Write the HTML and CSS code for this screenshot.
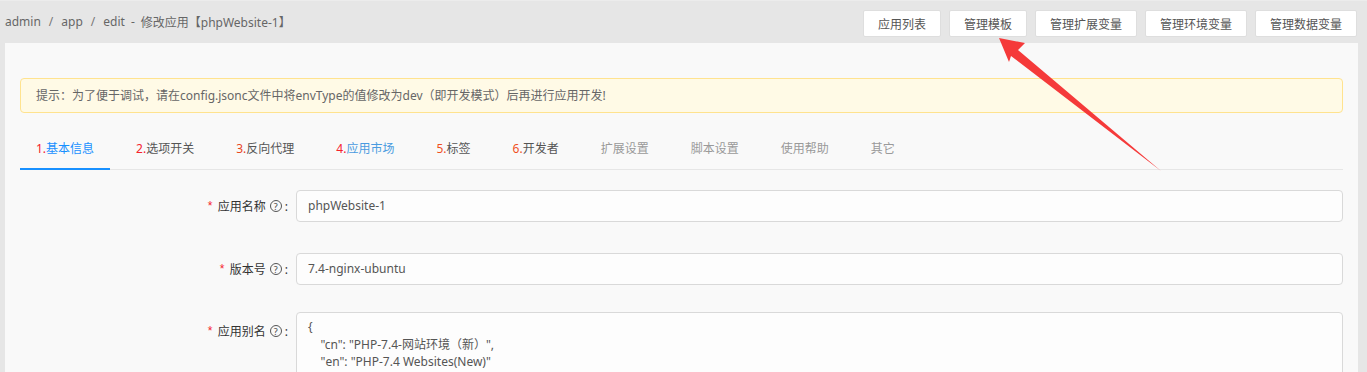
FILE: index.html
```html
<!DOCTYPE html>
<html lang="zh-CN">
<head>
<meta charset="utf-8">
<title>修改应用</title>
<link rel="stylesheet" href="styles.css">
</head>
<body>
<div class="topbar">
  <div class="crumbs">
    <span>admin</span><span class="sep">/</span><span>app</span><span class="sep">/</span><span>edit</span><span class="dash">-</span><span>修改应用【phpWebsite-1】</span>
  </div>
  <div class="actions">
    <button class="btn">应用列表</button>
    <button class="btn">管理模板</button>
    <button class="btn">管理扩展变量</button>
    <button class="btn">管理环境变量</button>
    <button class="btn">管理数据变量</button>
  </div>
</div>

<div class="panel">
  <div class="alert">提示：为了便于调试，请在config.jsonc文件中将envType的值修改为dev（即开发模式）后再进行应用开发!</div>

  <div class="tabs">
    <div class="tab active"><span class="num n1">1.</span>基本信息</div>
    <div class="tab"><span class="num n1">2.</span>选项开关</div>
    <div class="tab"><span class="num n3">3.</span>反向代理</div>
    <div class="tab market"><span class="num n1">4.</span>应用市场</div>
    <div class="tab"><span class="num n5">5.</span>标签</div>
    <div class="tab"><span class="num n5">6.</span>开发者</div>
    <div class="tab muted">扩展设置</div>
    <div class="tab muted">脚本设置</div>
    <div class="tab muted">使用帮助</div>
    <div class="tab muted">其它</div>
  </div>

  <div class="form">
    <div class="row">
      <label class="label"><span class="req">*</span>应用名称<span class="help">?</span>:</label>
      <div class="field input">phpWebsite-1</div>
    </div>
    <div class="row">
      <label class="label"><span class="req">*</span>版本号<span class="help">?</span>:</label>
      <div class="field input">7.4-nginx-ubuntu</div>
    </div>
    <div class="row row-area">
      <label class="label"><span class="req">*</span>应用别名<span class="help">?</span>:</label>
      <div class="field textarea">{
    "cn": "PHP-7.4-网站环境（新）",
    "en": "PHP-7.4 Websites(New)"</div>
    </div>
  </div>
</div>

<svg class="arrow" width="1367" height="372" viewBox="0 0 1367 372" aria-hidden="true">
  <polygon points="999,37 1025,42 1018,49 1161,170 1011,55 1009,61" fill="#f53a3a"/>
</svg>
</body>
</html>
```

FILE: styles.css
```css
* { box-sizing: border-box; }

html, body {
  margin: 0;
  padding: 0;
}

body {
  background: #e6e6e6;
  font-family: "Noto Sans", "Noto Sans CJK SC", sans-serif;
  font-size: 12px;
  color: #555;
  height: 372px;
  overflow: hidden;
  position: relative;
  border-top: 1px solid #ececec;
}

.topbar {
  display: flex;
  justify-content: space-between;
  align-items: center;
  height: 42px;
  padding: 0 10px 0 5px;
}

.crumbs {
  display: flex;
  align-items: center;
  color: #666;
  font-size: 12px;
  margin-top: -1px;
}

.crumbs .sep {
  margin: 0 8px;
  color: #777;
}

.crumbs .dash {
  margin: 0 6px;
}

.actions {
  display: flex;
  gap: 8px;
  margin-top: 2px;
}

.btn {
  height: 27px;
  padding: 0 14px;
  background: #fff;
  border: 1px solid #dedede;
  border-radius: 2px;
  font-family: "Noto Sans CJK SC", sans-serif;
  font-size: 12px;
  color: #555;
  cursor: pointer;
}

.panel {
  margin: 0 9px 0 5px;
  background: #f9f9f9;
  padding: 35px 15px 0 15px;
  height: 329px;
  overflow: hidden;
}

.alert {
  height: 35px;
  line-height: 33px;
  border: 1px solid #ffe38f;
  background: #fffae6;
  border-radius: 4px;
  padding: 0 15px;
  color: #666;
  font-size: 12px;
}

.tabs {
  display: flex;
  gap: 10px;
  margin-top: 15px;
  border-bottom: 1px solid #e6e6e6;
}

.tab {
  position: relative;
  padding: 11px 16px 10px;
  line-height: 20px;
  color: #555;
  white-space: nowrap;
}

.tab .num { color: #f5222d; }
.tab .n3 { color: #e8461e; }
.tab .n5 { color: #f0501e; }

.tab.active { color: #1890ff; }
.tab.active::after {
  content: "";
  position: absolute;
  left: 0;
  right: 0;
  bottom: -1px;
  height: 2px;
  background: #1890ff;
}

.tab.market { color: #4a9be0; }
.tab.muted { color: #9a9a9a; }

.form {
  padding-top: 20px;
}

.row {
  display: flex;
  align-items: flex-start;
  margin-bottom: 31px;
}

.row-area {
  margin-top: -4px;
  margin-bottom: 0;
}

.label {
  width: 276px;
  padding-right: 8px;
  display: flex;
  justify-content: flex-end;
  align-items: center;
  height: 32px;
  color: #333;
  font-size: 12px;
  white-space: nowrap;
}

.row-area .label {
  padding-top: 6px;
}

.req {
  color: #f5222d;
  margin-right: 4px;
  font-family: "Liberation Mono", monospace;
  font-size: 12px;
  position: relative;
  top: 1px;
}

.help {
  display: inline-flex;
  align-items: center;
  justify-content: center;
  width: 12px;
  height: 12px;
  border: 1px solid #555;
  border-radius: 50%;
  font-size: 9px;
  line-height: 1;
  color: #444;
  margin: 0 3px 0 4px;
}

.field {
  flex: 1;
  border: 1px solid #d9d9d9;
  border-radius: 4px;
  background: #fdfdfd;
  color: #555;
  padding: 0 11px;
}

.input {
  height: 32px;
  line-height: 30px;
}

.textarea {
  height: 64px;
  padding-top: 5px;
  line-height: 17.5px;
  white-space: pre;
}

.arrow {
  position: absolute;
  left: 0;
  top: 0;
  pointer-events: none;
}
```
